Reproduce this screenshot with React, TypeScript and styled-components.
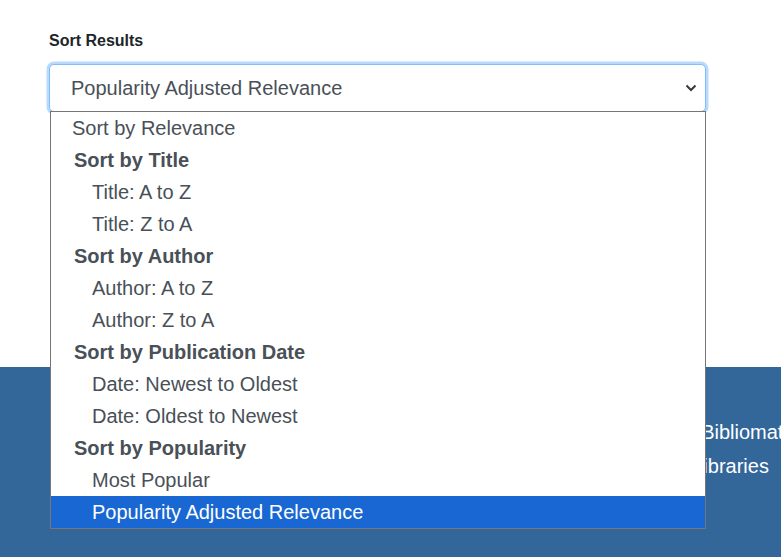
import styled, { createGlobalStyle } from 'styled-components';

const GlobalStyle = createGlobalStyle`
  html, body {
    margin: 0;
    padding: 0;
    background: #ffffff;
    font-family: "Liberation Sans", Arial, sans-serif;
  }
`;

type Option = { label: string; selected?: boolean };
type Group = { label?: string; options: Option[] };

const groups: Group[] = [
  { options: [{ label: 'Sort by Relevance' }] },
  { label: 'Sort by Title', options: [{ label: 'Title: A to Z' }, { label: 'Title: Z to A' }] },
  { label: 'Sort by Author', options: [{ label: 'Author: A to Z' }, { label: 'Author: Z to A' }] },
  {
    label: 'Sort by Publication Date',
    options: [{ label: 'Date: Newest to Oldest' }, { label: 'Date: Oldest to Newest' }],
  },
  {
    label: 'Sort by Popularity',
    options: [{ label: 'Most Popular' }, { label: 'Popularity Adjusted Relevance', selected: true }],
  },
];

const App = () => {
  return (
    <>
      <GlobalStyle />
      <Page>
        <Content>
          <Label>Sort Results</Label>
          <SelectWrap>
            <SelectBox>
              <SelectValue>Popularity Adjusted Relevance</SelectValue>
              <Chevron width="12" height="8" viewBox="0 0 12 8">
                <path d="M1.5 1.5 L6 6 L10.5 1.5" fill="none" stroke="#343a40" strokeWidth="2" />
              </Chevron>
            </SelectBox>
            <List>
              {groups.map((g, gi) => (
                <div key={gi}>
                  {g.label && <GroupLabel>{g.label}</GroupLabel>}
                  {g.options.map((o) => (
                    <Item key={o.label} $nested={!!g.label} $selected={!!o.selected}>
                      {o.label}
                    </Item>
                  ))}
                </div>
              ))}
            </List>
          </SelectWrap>
        </Content>
        <Footer>
          <FooterLine $indent={590}>Powered by Bibliomation</FooterLine>
          <FooterLine $indent={620}>Member libraries</FooterLine>
        </Footer>
      </Page>
    </>
  );
};

export default App;

const Page = styled.div`
  width: 781px;
  height: 557px;
  overflow: hidden;
  display: flex;
  flex-direction: column;
`;

const Content = styled.div`
  height: 367px;
  box-sizing: border-box;
  padding: 29px 0 0 49px;
  position: relative;
  z-index: 2;
`;

const Label = styled.div`
  font-size: 16px;
  line-height: 24px;
  font-weight: bold;
  color: #212529;
  margin-bottom: 11px;
`;

const SelectWrap = styled.div`
  position: relative;
  width: 657px;
`;

const SelectBox = styled.div`
  height: 48px;
  box-sizing: border-box;
  border: 1px solid #80bdff;
  border-radius: 5px;
  box-shadow: 0 0 0 2.5px #b9d9fd;
  display: flex;
  align-items: center;
  justify-content: space-between;
  padding: 0 8px 0 21px;
  background: #fff;
`;

const SelectValue = styled.span`
  font-size: 20px;
  color: #495057;
`;

const Chevron = styled.svg`
  display: block;
`;

const List = styled.div`
  position: absolute;
  top: 47px;
  left: 1px;
  width: 656px;
  box-sizing: border-box;
  border: 1px solid #767676;
  background: #fff;
`;

const GroupLabel = styled.div`
  height: 32px;
  line-height: 32px;
  padding-left: 23px;
  font-size: 20px;
  font-weight: bold;
  color: #495057;
`;

const Item = styled.div<{ $nested: boolean; $selected: boolean }>`
  height: 32px;
  line-height: 32px;
  padding-left: ${(p) => (p.$nested ? '41px' : '21px')};
  font-size: 20px;
  color: ${(p) => (p.$selected ? '#ffffff' : '#495057')};
  background: ${(p) => (p.$selected ? '#1967d2' : 'transparent')};
`;

const Footer = styled.div`
  flex: 1;
  background: #336699;
  padding-top: 48px;
  display: flex;
  flex-direction: column;
  overflow: hidden;
`;

const FooterLine = styled.div<{ $indent: number }>`
  padding-left: ${(p) => p.$indent}px;
  font-size: 20px;
  line-height: 34px;
  color: #ffffff;
  white-space: nowrap;
`;
